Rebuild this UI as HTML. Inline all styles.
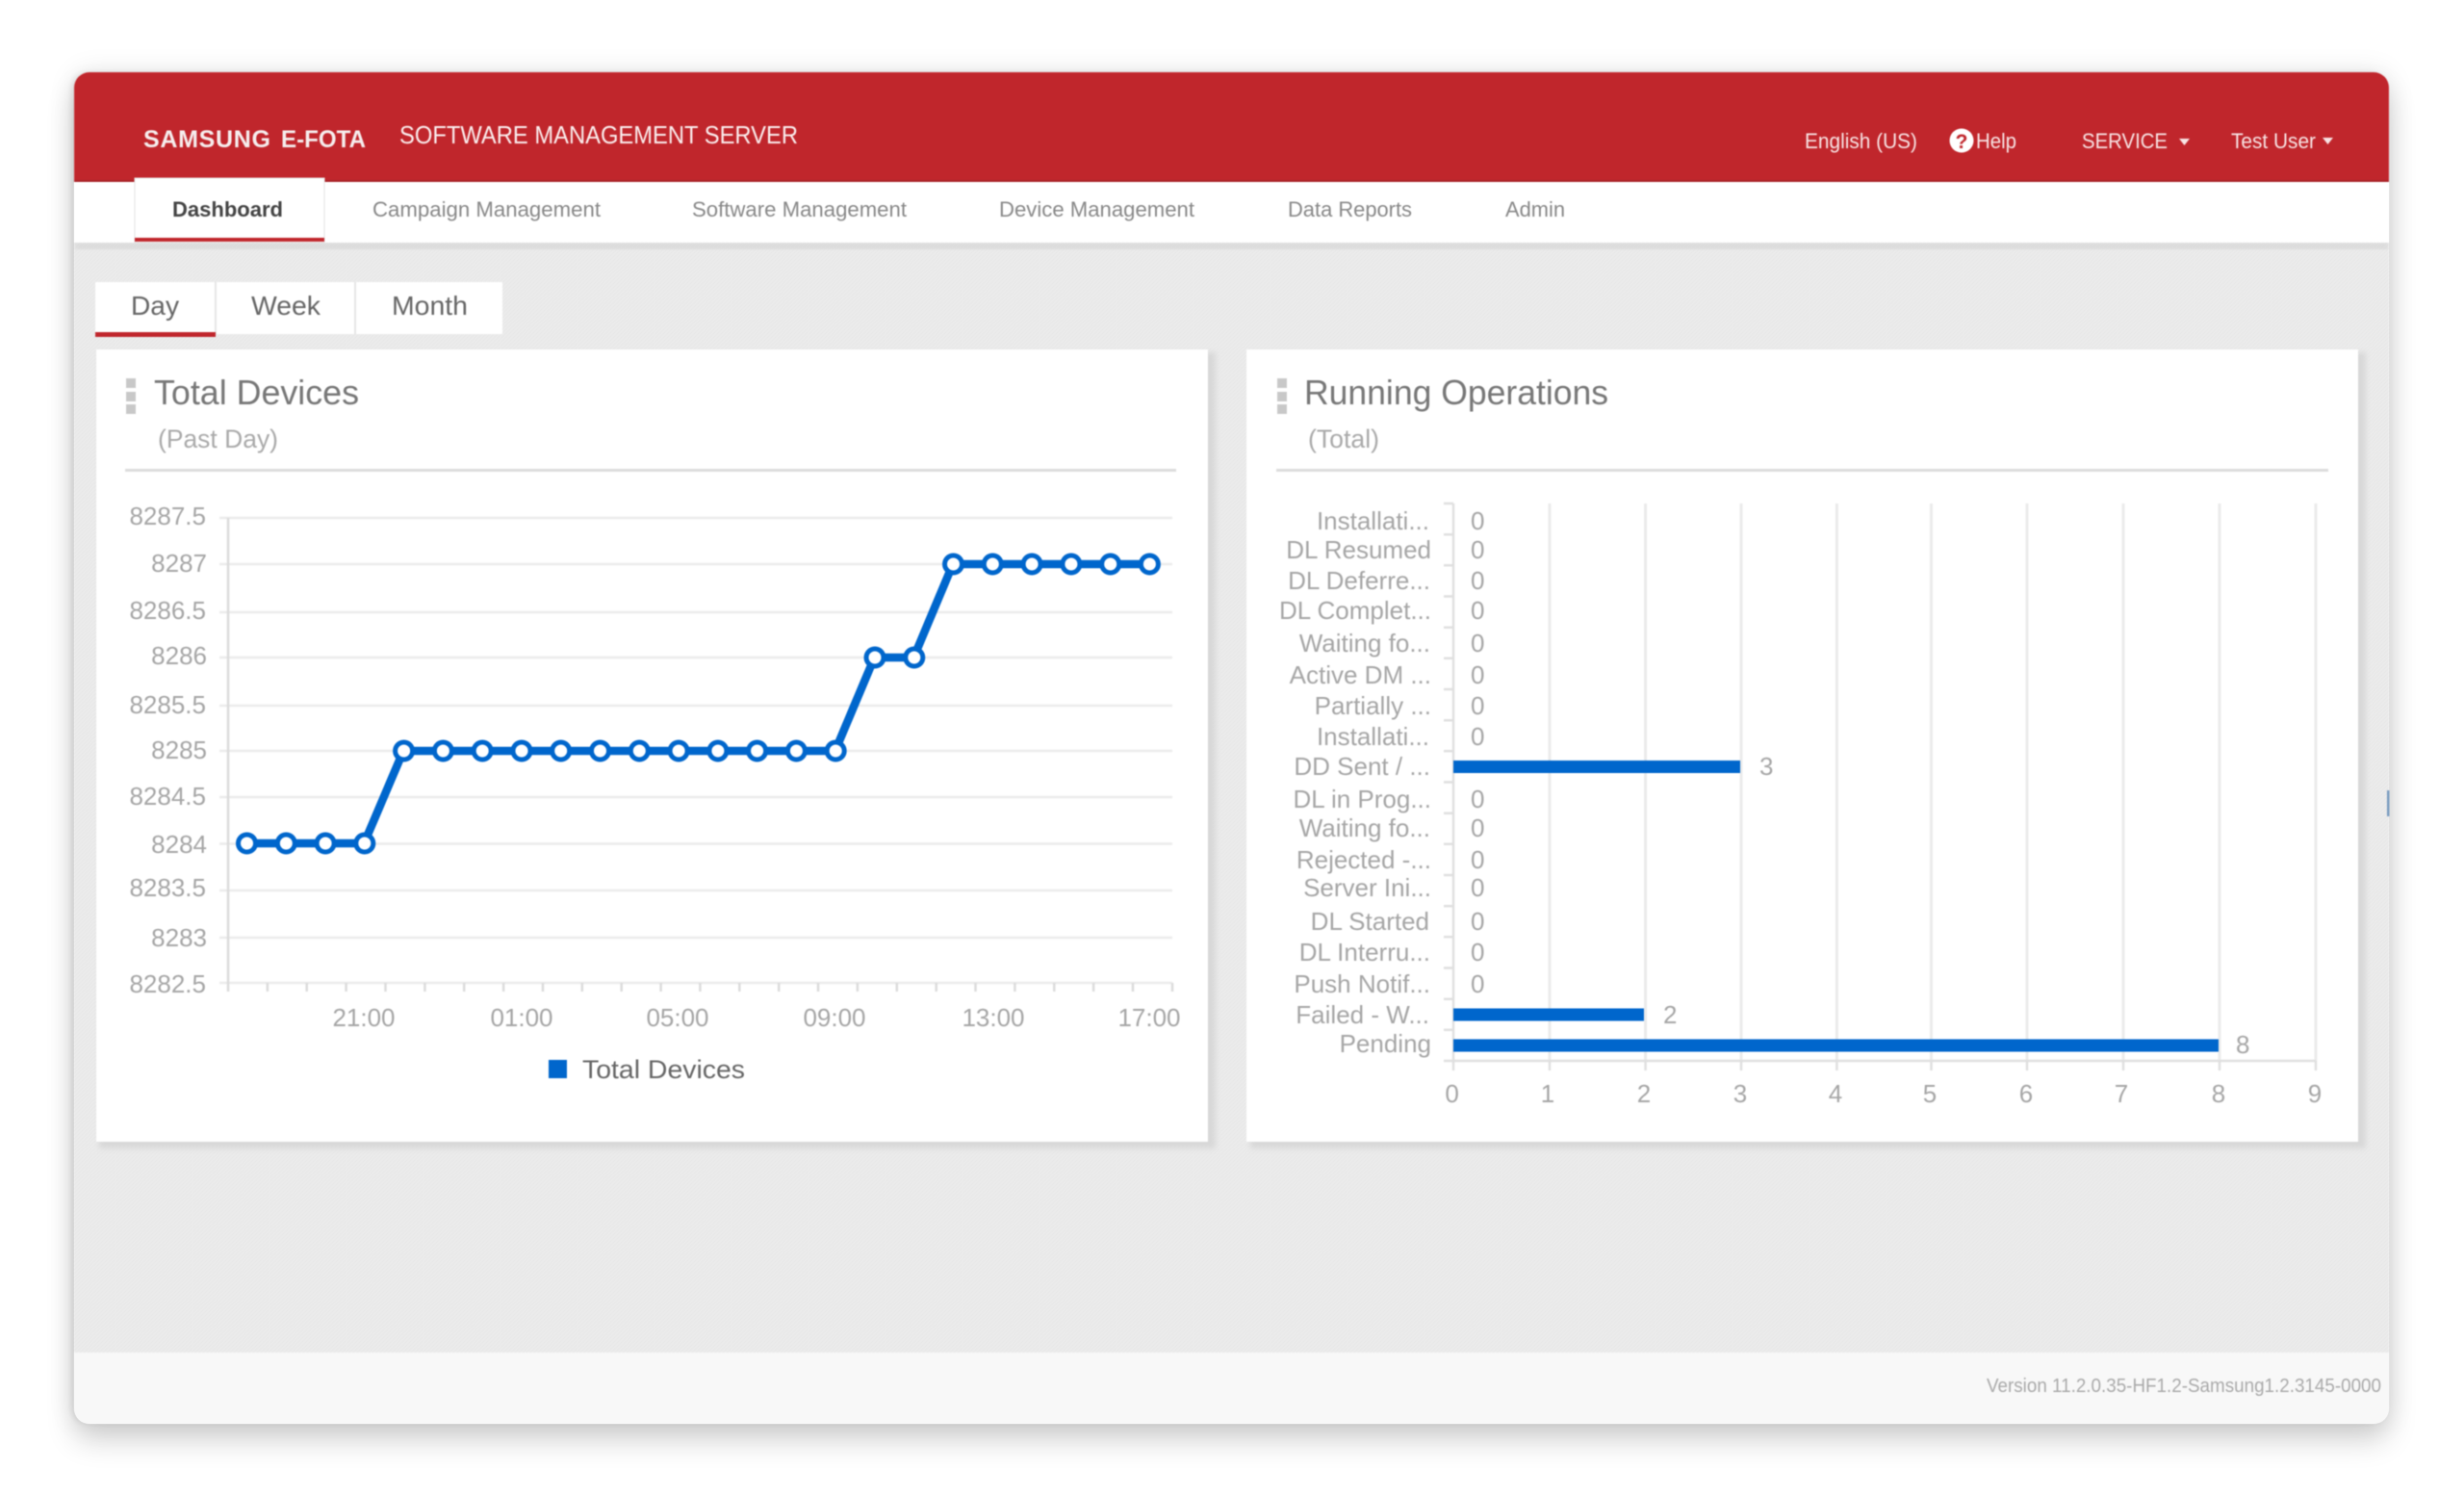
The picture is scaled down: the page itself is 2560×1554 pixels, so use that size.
<!DOCTYPE html>
<html lang="en"><head><meta charset="utf-8"><title>Samsung E-FOTA Dashboard</title>
<style>
html,body{margin:0;padding:0;background:#fff;width:2560px;height:1554px;overflow:hidden}
#win{position:absolute;left:77px;top:75px;width:2405px;height:1404px;border-radius:16px;box-shadow:0 18px 30px rgba(0,0,0,.16),0 0 28px rgba(0,0,0,.10),-3px 0 6px rgba(0,0,0,.08)}
svg{position:absolute;left:0;top:0;filter:blur(.6px)}
text{font-family:"Liberation Sans",sans-serif}
</style></head><body>
<div id="win"></div>
<svg width="2560" height="1554" viewBox="0 0 2560 1554" xmlns="http://www.w3.org/2000/svg">
<defs>
<clipPath id="w"><rect x="77" y="75" width="2405" height="1404" rx="16"/></clipPath>
<pattern id="d" width="4" height="4" patternUnits="userSpaceOnUse"><rect width="4" height="4" fill="#ececec"/><path d="M0 4L4 0" stroke="#e6e6e6" stroke-width="1"/></pattern>
<filter id="s" x="-5%" y="-5%" width="110%" height="110%"><feGaussianBlur stdDeviation="3"/></filter>
</defs>
<g clip-path="url(#w)">
<rect x="77" y="75" width="2405" height="1404" fill="url(#d)"/>
<rect x="77" y="1405" width="2405" height="74" fill="#f8f8f8"/>
<rect x="77" y="75" width="2405" height="114" fill="#c0262c"/>
<rect x="77" y="187" width="2405" height="2" fill="#a92328"/>
<rect x="77" y="252" width="2405" height="7" fill="#d8d8d8" filter="url(#s)"/>
<rect x="77" y="189" width="2405" height="63" fill="#fff"/>
</g>
<!-- header -->
<text x="149" y="153" font-size="25" font-weight="700" fill="#f6eeee" textLength="132">SAMSUNG</text>
<text x="292" y="153" font-size="25" font-weight="700" fill="#f6eeee" textLength="88" lengthAdjust="spacingAndGlyphs">E-FOTA</text>
<text x="415" y="149" font-size="26" fill="#fbeeee" textLength="414" lengthAdjust="spacingAndGlyphs">SOFTWARE MANAGEMENT SERVER</text>
<g fill="#f8e4e4" font-size="22">
<text x="1875" y="154" textLength="117" lengthAdjust="spacingAndGlyphs">English (US)</text>
<text x="2053" y="154" textLength="42" lengthAdjust="spacingAndGlyphs">Help</text>
<text x="2163" y="154" textLength="89" lengthAdjust="spacingAndGlyphs">SERVICE</text>
<text x="2318" y="154" textLength="88" lengthAdjust="spacingAndGlyphs">Test User</text>
</g>
<circle cx="2038" cy="146" r="12.5" fill="#fff"/>
<text x="2038" y="154" text-anchor="middle" font-size="21" font-weight="700" fill="#c0262c">?</text>
<path d="M2264 144h11l-5.500 7zM2413 143h11l-5.500 7z" fill="#f8e4e4"/>
<!-- nav -->
<rect x="140" y="185" width="197" height="67" fill="#fff" stroke="#e4e4e4" stroke-width="1"/>
<rect x="140" y="247" width="197" height="4" fill="#c0262c"/>
<text x="179" y="225" font-size="22" font-weight="700" fill="#444" textLength="115" lengthAdjust="spacingAndGlyphs">Dashboard</text>
<g font-size="22" fill="#888">
<text x="387" y="225" textLength="237" lengthAdjust="spacingAndGlyphs">Campaign Management</text>
<text x="719" y="225" textLength="223" lengthAdjust="spacingAndGlyphs">Software Management</text>
<text x="1038" y="225" textLength="203" lengthAdjust="spacingAndGlyphs">Device Management</text>
<text x="1338" y="225" textLength="129" lengthAdjust="spacingAndGlyphs">Data Reports</text>
<text x="1564" y="225" textLength="62" lengthAdjust="spacingAndGlyphs">Admin</text>
</g>
<!-- day tabs -->
<rect x="99" y="293" width="423" height="54" fill="#fff"/>
<path d="M224 293v54M369 293v54" stroke="#e6e6e6" stroke-width="2"/>
<rect x="99" y="345" width="125" height="5" fill="#c0262c"/>
<g font-size="28" fill="#666">
<text x="136" y="327" textLength="50" lengthAdjust="spacingAndGlyphs">Day</text>
<text x="261" y="327" textLength="72" lengthAdjust="spacingAndGlyphs">Week</text>
<text x="407" y="327" textLength="79" lengthAdjust="spacingAndGlyphs">Month</text>
</g>
<!-- panels -->
<rect x="103" y="366" width="1160" height="827" fill="#d8d8d8" filter="url(#s)"/>
<rect x="1299" y="366" width="1159" height="827" fill="#d8d8d8" filter="url(#s)"/>
<rect x="100" y="363" width="1155" height="823" fill="#fff"/>
<rect x="1295" y="363" width="1155" height="823" fill="#fff"/>
<path d="M131 393h10v10h-10zM131 407h10v10h-10zM131 420h10v10h-10zM1327 393h10v10h-10zM1327 407h10v10h-10zM1327 420h10v10h-10z" fill="#c8c8c8"/>
<text x="160" y="420" font-size="36" fill="#777" textLength="213" lengthAdjust="spacingAndGlyphs">Total Devices</text>
<text x="1355" y="420" font-size="36" fill="#777" textLength="316" lengthAdjust="spacingAndGlyphs">Running Operations</text>
<text x="164" y="465" font-size="27" fill="#aaa" textLength="125" lengthAdjust="spacingAndGlyphs">(Past Day)</text>
<text x="1359" y="465" font-size="27" fill="#aaa" textLength="74" lengthAdjust="spacingAndGlyphs">(Total)</text>
<rect x="130" y="487" width="1092" height="3" fill="#dcdcdc"/>
<rect x="1326" y="487" width="1093" height="3" fill="#dcdcdc"/>
<!-- line chart -->
<path d="M228 538H1218M228 586H1218M228 636H1218M228 683H1218M228 733H1218M228 780H1218M228 828H1218M228 876.500H1218M228 925H1218M228 974H1218M228 1021H1218" stroke="#ebebeb" stroke-width="2.500" fill="none"/>
<path d="M237 538V1030M277.900 1021v9M318.700 1021v9M359.600 1021v9M400.500 1021v9M441.400 1021v9M482.200 1021v9M523.100 1021v9M564 1021v9M604.800 1021v9M645.700 1021v9M686.600 1021v9M727.400 1021v9M768.300 1021v9M809.200 1021v9M850 1021v9M890.900 1021v9M931.800 1021v9M972.700 1021v9M1013.500 1021v9M1054.400 1021v9M1095.300 1021v9M1136.100 1021v9M1177 1021v9M1218 1021v9" stroke="#dcdcdc" stroke-width="2.500" fill="none"/>
<g font-size="26" fill="#a6a6a6" text-anchor="end">
<text x="214" y="545">8287.5</text>
<text x="215" y="594">8287</text>
<text x="214" y="643">8286.5</text>
<text x="215" y="690">8286</text>
<text x="214" y="741">8285.5</text>
<text x="215" y="788">8285</text>
<text x="214" y="836">8284.5</text>
<text x="215" y="886">8284</text>
<text x="214" y="931">8283.5</text>
<text x="215" y="983">8283</text>
<text x="214" y="1031">8282.5</text>
</g>
<g font-size="26" fill="#a6a6a6" text-anchor="middle">
<text x="378" y="1066">21:00</text>
<text x="542" y="1066">01:00</text>
<text x="704" y="1066">05:00</text>
<text x="867" y="1066">09:00</text>
<text x="1032" y="1066">13:00</text>
<text x="1194" y="1066">17:00</text>
</g>
<polyline points="256,876 378.300,876 419.100,780 867.700,780 908.500,683 949.300,683 990,586 1193.900,586" fill="none" stroke="#0066cc" stroke-width="8.500"/>
<g fill="#fff" stroke="#0066cc" stroke-width="5">
<circle cx="256.500" cy="876" r="9"/><circle cx="297.300" cy="876" r="9"/><circle cx="338.100" cy="876" r="9"/><circle cx="378.800" cy="876" r="9"/>
<circle cx="419.600" cy="780" r="9"/><circle cx="460.400" cy="780" r="9"/><circle cx="501.200" cy="780" r="9"/><circle cx="542" cy="780" r="9"/><circle cx="582.700" cy="780" r="9"/><circle cx="623.500" cy="780" r="9"/><circle cx="664.300" cy="780" r="9"/><circle cx="705.100" cy="780" r="9"/><circle cx="745.900" cy="780" r="9"/><circle cx="786.600" cy="780" r="9"/><circle cx="827.400" cy="780" r="9"/><circle cx="868.200" cy="780" r="9"/>
<circle cx="909" cy="683" r="9"/><circle cx="949.800" cy="683" r="9"/>
<circle cx="990.500" cy="586" r="9"/><circle cx="1031.300" cy="586" r="9"/><circle cx="1072.100" cy="586" r="9"/><circle cx="1112.900" cy="586" r="9"/><circle cx="1153.700" cy="586" r="9"/><circle cx="1194.400" cy="586" r="9"/>
</g>
<rect x="570" y="1101" width="19" height="19" fill="#0066cc"/>
<text x="605" y="1120" font-size="27" fill="#666" textLength="169" lengthAdjust="spacingAndGlyphs">Total Devices</text>
<!-- bar chart -->
<path d="M1610 523V1102M1709.600 523V1102M1809 523V1102M1908.400 523V1102M2006.500 523V1102M2106 523V1102M2206 523V1102M2306 523V1102M2406 523V1102" stroke="#ebebeb" stroke-width="3" fill="none"/>
<path d="M1510 523V1112M1500 523h10M1500 555.200h10M1500 587.300h10M1500 619.500h10M1500 651.700h10M1500 683.800h10M1500 716h10M1500 748.200h10M1500 780.300h10M1500 812.500h10M1500 844.700h10M1500 876.800h10M1500 909h10M1500 941.200h10M1500 973.300h10M1500 1005.500h10M1500 1037.700h10M1500 1069.800h10M1500 1102h906M1610 1102v10M1709.600 1102v10M1809 1102v10M1908.400 1102v10M2006.500 1102v10M2106 1102v10M2206 1102v10M2306 1102v10M2406 1102v10" stroke="#e0e0e0" stroke-width="2.500" fill="none"/>
<rect x="1510" y="790" width="298" height="13" fill="#0066cc"/>
<rect x="1510" y="1047.500" width="198" height="13" fill="#0066cc"/>
<rect x="1510" y="1079.500" width="795" height="13" fill="#0066cc"/>
<g font-size="26" fill="#a6a6a6" text-anchor="end">
<text x="1485" y="550">Installati...</text>
<text x="1487" y="580">DL Resumed</text>
<text x="1486" y="612">DL Deferre...</text>
<text x="1487" y="643">DL Complet...</text>
<text x="1486" y="677">Waiting fo...</text>
<text x="1487" y="710">Active DM ...</text>
<text x="1487" y="742">Partially ...</text>
<text x="1485" y="774">Installati...</text>
<text x="1486" y="805">DD Sent / ...</text>
<text x="1487" y="839">DL in Prog...</text>
<text x="1486" y="869">Waiting fo...</text>
<text x="1487" y="902">Rejected -...</text>
<text x="1487" y="931">Server Ini...</text>
<text x="1485" y="966">DL Started</text>
<text x="1486" y="998">DL Interru...</text>
<text x="1486" y="1031">Push Notif...</text>
<text x="1485" y="1063">Failed - W...</text>
<text x="1487" y="1093">Pending</text>
</g>
<g font-size="26" fill="#a6a6a6">
<text x="1528" y="550">0</text><text x="1528" y="580">0</text><text x="1528" y="612">0</text><text x="1528" y="643">0</text><text x="1528" y="677">0</text><text x="1528" y="710">0</text><text x="1528" y="742">0</text><text x="1528" y="774">0</text>
<text x="1828" y="805">3</text>
<text x="1528" y="839">0</text><text x="1528" y="869">0</text><text x="1528" y="902">0</text><text x="1528" y="931">0</text><text x="1528" y="966">0</text><text x="1528" y="998">0</text><text x="1528" y="1031">0</text>
<text x="1728" y="1063">2</text>
<text x="2323" y="1094">8</text>
</g>
<g font-size="26" fill="#a6a6a6" text-anchor="middle">
<text x="1508.600" y="1145">0</text><text x="1608" y="1145">1</text><text x="1708" y="1145">2</text><text x="1808" y="1145">3</text><text x="1907" y="1145">4</text><text x="2005" y="1145">5</text><text x="2105" y="1145">6</text><text x="2204" y="1145">7</text><text x="2305" y="1145">8</text><text x="2405" y="1145">9</text>
</g>
<rect x="2480" y="821" width="2.500" height="27" fill="#7a9cc0"/>
<text x="2064" y="1446" font-size="20" fill="#aaa" textLength="410" lengthAdjust="spacingAndGlyphs">Version 11.2.0.35-HF1.2-Samsung1.2.3145-0000</text>
</svg>
</body></html>
